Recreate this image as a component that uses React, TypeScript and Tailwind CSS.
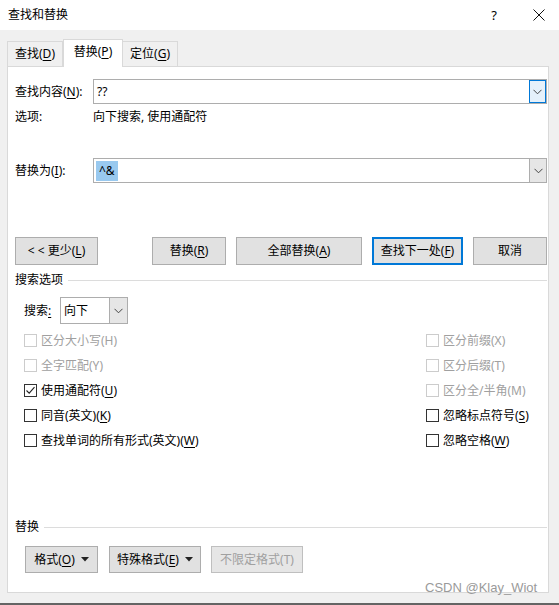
import type { ReactNode } from "react";

function Chevron({ color = "#444" }: { color?: string }) {
  return (
    <svg width="9" height="6" viewBox="0 0 9 6">
      <path d="M0.5 0.8 L4.5 4.8 L8.5 0.8" fill="none" stroke={color} strokeWidth="1" />
    </svg>
  );
}

function Caret() {
  return (
    <svg width="8" height="5" viewBox="0 0 8 5" className="ml-[6px]">
      <path d="M0 0 H8 L4 4.5 Z" fill="#222" />
    </svg>
  );
}

function Btn({
  w,
  children,
  primary,
  disabled,
  className = "",
}: {
  w: string;
  children: ReactNode;
  primary?: boolean;
  disabled?: boolean;
  className?: string;
}) {
  return (
    <div
      className={`${w} h-full flex items-center justify-center bg-[#e1e1e1] ${
        primary ? "border-2 border-[#0078d7]" : "border border-[#adadad]"
      } ${disabled ? "text-[#a0a0a0] border-[#bfbfbf] bg-[#e6e6e6]" : ""} ${className}`}
    >
      {children}
    </div>
  );
}

function Check({
  label,
  checked,
  disabled,
}: {
  label: ReactNode;
  checked?: boolean;
  disabled?: boolean;
}) {
  return (
    <div className={`h-[25px] flex items-center ${disabled ? "text-[#a0a0a0]" : ""}`}>
      <div
        className={`w-[13px] h-[13px] border bg-white flex items-center justify-center ${
          disabled ? "border-[#cccccc]" : "border-[#333333]"
        }`}
      >
        {checked && (
          <svg width="11" height="11" viewBox="0 0 11 11">
            <path d="M1.5 5.5 L4.2 8.2 L9.5 2.2" fill="none" stroke="#222" strokeWidth="1.1" />
          </svg>
        )}
      </div>
      <span className="ml-[4px]">{label}</span>
    </div>
  );
}

export default function App() {
  return (
    <div className="relative w-[559px] h-[605px] bg-[#f0f0f0] flex flex-col text-[12px] leading-[16px] text-black font-['Noto_Sans','Noto_Sans_CJK_SC',sans-serif] overflow-hidden">
      {/* title bar */}
      <div className="h-[30px] bg-white flex items-center pl-[8px] shrink-0">
        <span>查找和替换</span>
        <span className="ml-auto mr-[36px] text-[13px]">?</span>
        <svg width="12" height="12" viewBox="0 0 12 12" className="mr-[14px]">
          <path d="M0.5 0.5 L11.5 11.5 M11.5 0.5 L0.5 11.5" stroke="#111" strokeWidth="1" />
        </svg>
      </div>

      {/* tabs */}
      <div className="mt-[9px] pl-[7px] flex items-end h-[27px] shrink-0">
        <div className="w-[56px] h-[25px] border border-b-0 border-[#d9d9d9] flex items-center justify-center">
          查找(<u className="underline-offset-2">D</u>)
        </div>
        <div className="relative z-10 w-[60px] h-[28px] -mb-px bg-white border border-b-0 border-[#d9d9d9] flex items-center justify-center pb-[3px]">
          替换(<u className="underline-offset-2">P</u>)
        </div>
        <div className="w-[55px] h-[25px] border border-b-0 border-l-0 border-[#d9d9d9] flex items-center justify-center">
          定位(<u className="underline-offset-2">G</u>)
        </div>
      </div>

      {/* panel */}
      <div className="ml-[7px] w-[542px] h-[527px] bg-white border border-[#d9d9d9] shrink-0 flex flex-col pl-[7px] pr-[1px]">
        <div className="mt-[12px] h-[25px] flex items-center">
          <span className="w-[78px]">
            查找内容(<u className="underline-offset-2">N</u>):
          </span>
          <div className="flex-1 h-full border border-[#adadad] flex items-center">
            <span className="pl-[3px] flex-1">??</span>
            <div className="w-[17px] h-full border border-[#0078d7] bg-[#e5f1fb] flex items-center justify-center">
              <Chevron />
            </div>
          </div>
        </div>

        <div className="mt-[5px] h-[16px] flex items-center">
          <span className="w-[78px]">选项:</span>
          <span>向下搜索, 使用通配符</span>
        </div>

        <div className="mt-[33px] h-[25px] flex items-center">
          <span className="w-[78px]">
            替换为(<u className="underline-offset-2">I</u>):
          </span>
          <div className="flex-1 h-full border border-[#adadad] flex items-center">
            <div className="flex-1 pl-[2px]">
              <span className="bg-[#99c9ef] px-[3px] py-[2px] inline-block leading-[16px]">^&amp;</span>
            </div>
            <div className="w-[17px] h-full border-l border-[#adadad] bg-[#e6e6e6] flex items-center justify-center">
              <Chevron />
            </div>
          </div>
        </div>

        <div className="mt-[54px] h-[28px] flex">
          <Btn w="w-[83px]">
            &lt; &lt; 更少(<u className="underline-offset-2">L</u>)
          </Btn>
          <Btn w="w-[74px]" className="ml-[54px]">
            替换(<u className="underline-offset-2">R</u>)
          </Btn>
          <Btn w="w-[126px]" className="ml-[10px]">
            全部替换(<u className="underline-offset-2">A</u>)
          </Btn>
          <Btn w="w-[91px]" primary className="ml-[10px]">
            查找下一处(<u className="underline-offset-2">F</u>)
          </Btn>
          <Btn w="w-[74px]" className="ml-[10px]">
            取消
          </Btn>
        </div>

        <div className="mt-[7px] h-[16px] flex items-center">
          <span>搜索选项</span>
          <div className="flex-1 h-px bg-[#dcdcdc] ml-[5px]" />
        </div>

        <div className="mt-[9px] h-[27px] flex items-center pl-[9px]">
          <span className="w-[36px]">
            搜索<u className="underline-offset-2">:</u>
          </span>
          <div className="w-[68px] h-full border border-[#adadad] flex items-center">
            <span className="pl-[3px] flex-1">向下</span>
            <div className="w-[18px] h-full border-l border-[#adadad] bg-[#e6e6e6] flex items-center justify-center">
              <Chevron />
            </div>
          </div>
        </div>

        <div className="mt-[4px] grid grid-cols-[402px_1fr] pl-[9px]">
          <Check disabled label="区分大小写(H)" />
          <Check disabled label="区分前缀(X)" />
          <Check disabled label="全字匹配(Y)" />
          <Check disabled label="区分后缀(T)" />
          <Check checked label={<>使用通配符(<u className="underline-offset-2">U</u>)</>} />
          <Check disabled label="区分全/半角(M)" />
          <Check label={<>同音(英文)(<u className="underline-offset-2">K</u>)</>} />
          <Check label={<>忽略标点符号(<u className="underline-offset-2">S</u>)</>} />
          <Check label={<>查找单词的所有形式(英文)(<u className="underline-offset-2">W</u>)</>} />
          <Check label={<>忽略空格(<u className="underline-offset-2">W</u>)</>} />
        </div>

        <div className="mt-[66px] h-[16px] flex items-center">
          <span>替换</span>
          <div className="flex-1 h-px bg-[#dcdcdc] ml-[5px]" />
        </div>

        <div className="mt-[11px] h-[27px] flex pl-[10px]">
          <Btn w="w-[73px]">
            格式(<u className="underline-offset-2">O</u>)
            <Caret />
          </Btn>
          <Btn w="w-[92px]" className="ml-[11px]">
            特殊格式(<u className="underline-offset-2">E</u>)
            <Caret />
          </Btn>
          <Btn w="w-[92px]" disabled className="ml-[10px]">
            不限定格式(T)
          </Btn>
        </div>
      </div>

      <div className="flex-1" />
      <div className="h-[2px] bg-[#646464] shrink-0" />

      <div className="absolute left-[425px] top-[581px] text-[13px] leading-[14px] text-[#9a9a9a] font-['Liberation_Sans',sans-serif]">
        CSDN @Klay_Wiot
      </div>
    </div>
  );
}
